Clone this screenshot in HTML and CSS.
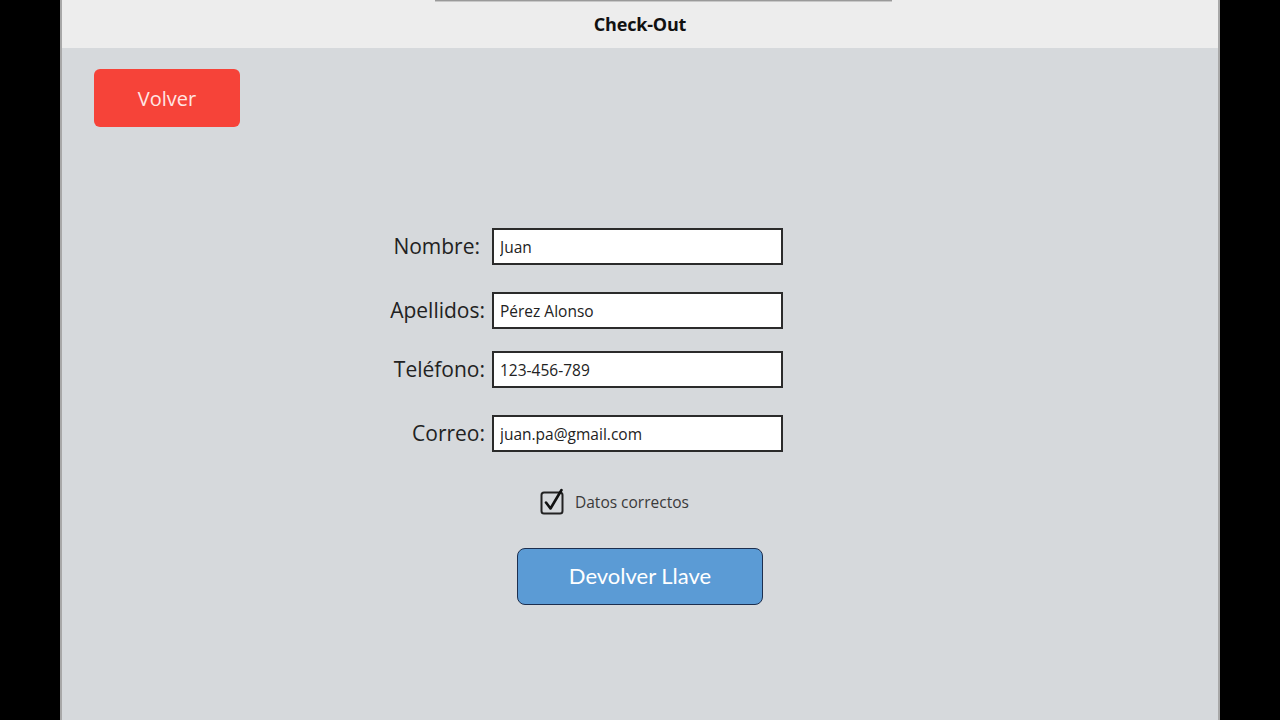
FILE: index.html
```html
<!DOCTYPE html>
<html lang="es">
<head>
<meta charset="utf-8">
<title>Check-Out</title>
<link rel="stylesheet" href="styles.css">
</head>
<body>
<div class="frame">
  <header class="topbar">
    <div class="topline"></div>
    <h1 class="title">Check-Out</h1>
  </header>
  <main class="content">
    <button class="btn-back" type="button">Volver</button>
    <form class="form">
      <div class="fields">
        <label class="label label-first" for="nombre">Nombre:</label>
        <input class="input" id="nombre" type="text" value="Juan">
        <label class="label" for="apellidos">Apellidos:</label>
        <input class="input" id="apellidos" type="text" value="Pérez Alonso">
        <label class="label row-tight" for="telefono">Teléfono:</label>
        <input class="input row-tight" id="telefono" type="text" value="123-456-789">
        <label class="label" for="correo">Correo:</label>
        <input class="input" id="correo" type="text" value="juan.pa@gmail.com">
      </div>
      <div class="check-row">
        <svg class="check-icon" width="26" height="28" viewBox="0 0 26 28" aria-hidden="true">
          <rect x="1.5" y="4.5" width="21" height="21" rx="2.5" fill="none" stroke="#222" stroke-width="2"/>
          <path d="M6 14.5 L10.5 20.5 L21.5 2" fill="none" stroke="#111" stroke-width="2.6" stroke-linecap="round" stroke-linejoin="round"/>
        </svg>
        <span class="check-text">Datos correctos</span>
      </div>
      <button class="btn-main" type="button">Devolver Llave</button>
    </form>
  </main>
</div>
</body>
</html>
```

FILE: styles.css
```css
html, body {
  margin: 0;
  padding: 0;
  height: 100%;
  background: #000;
}

.frame {
  margin-left: 60px;
  width: 1156px;
  height: 720px;
  border-left: 2px solid #a8a8a8;
  border-right: 2px solid #a8a8a8;
  display: flex;
  flex-direction: column;
  font-family: "Open Sans", "Noto Sans", sans-serif;
}

.topbar {
  height: 48px;
  background: #ededed;
  display: flex;
  flex-direction: column;
  align-items: center;
}

.topline {
  margin-left: 46px;
  width: 457px;
  height: 1px;
  background: #9a9a9a;
  border-bottom: 1px solid #c8c8c8;
}

.title {
  margin: 7px 0 0;
  font-size: 18px;
  font-weight: 700;
  line-height: 30px;
  color: #111;
  letter-spacing: -0.2px;
}

.content {
  flex: 1;
  background: #d6d9dc;
  padding: 21px 0 0 32px;
  display: flex;
  flex-direction: column;
  align-items: flex-start;
}

.btn-back {
  width: 146px;
  height: 58px;
  background: #f64339;
  border: none;
  border-radius: 6px;
  color: #ffe6e4;
  font-family: "Open Sans", "Noto Sans", sans-serif;
  font-size: 20px;
  padding: 0;
}

.form {
  margin: 101px 0 0 191px;
  width: 498px;
  display: flex;
  flex-direction: column;
}

.fields {
  display: grid;
  grid-template-columns: 200px 291px;
  column-gap: 7px;
  row-gap: 27px;
  align-items: center;
}

.label {
  text-align: right;
  font-size: 21px;
  color: #222;
  line-height: 37px;
  letter-spacing: 0;
}

.label-first {
  padding-right: 5px;
}

.row-tight {
  margin-top: -5px;
}

.input {
  box-sizing: border-box;
  width: 291px;
  height: 37px;
  border: 2px solid #2b2b2b;
  background: #fff;
  padding: 0 6px;
  font-family: "Open Sans", "Noto Sans", sans-serif;
  font-size: 15.5px;
  color: #222;
  outline: none;
}

.check-row {
  margin: 36px 0 0 255px;
  display: flex;
  align-items: center;
  gap: 9px;
  height: 28px;
}

.check-icon {
  display: block;
}

.check-text {
  font-size: 15.5px;
  color: #3a3a3a;
}

.btn-main {
  margin: 32px 0 0 232px;
  width: 246px;
  height: 57px;
  background: #5b9bd5;
  border: 1px solid #1d2f4f;
  border-radius: 8px;
  color: #fff;
  font-family: "Lato", "Open Sans", sans-serif;
  font-size: 22px;
  padding: 0 0 2px;
}
```
